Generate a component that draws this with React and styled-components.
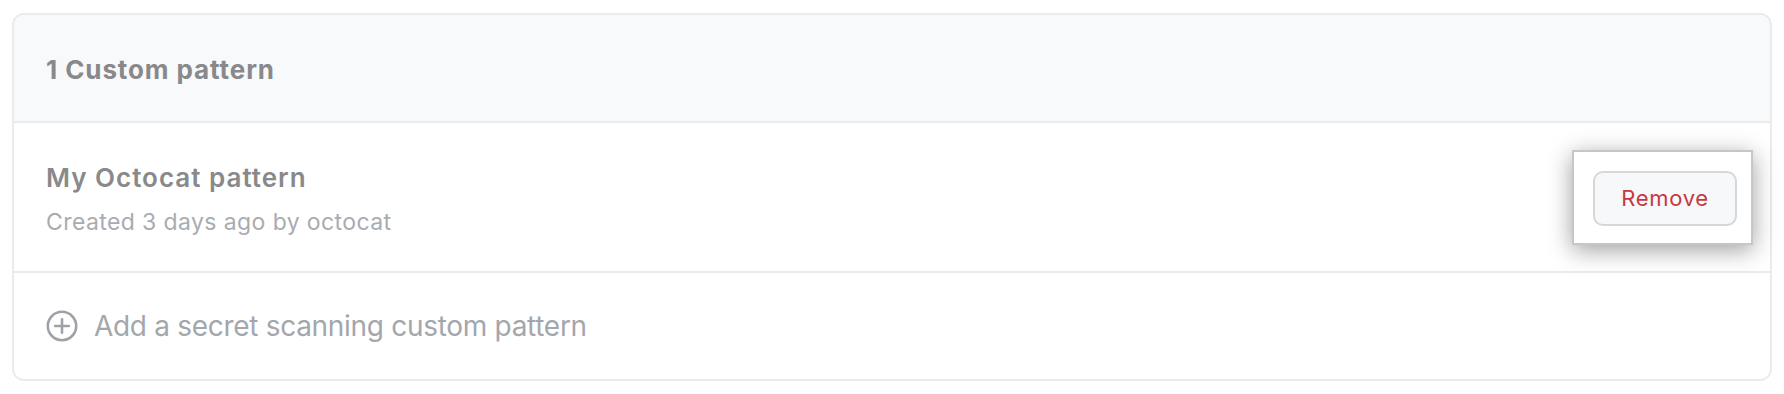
import React from 'react';
import styled, { createGlobalStyle } from 'styled-components';

const GlobalStyle = createGlobalStyle`
  html, body {
    margin: 0;
    padding: 0;
    background: #ffffff;
  }
  body {
    font-family: Inter, "Noto Sans", "Liberation Sans", sans-serif;
    -webkit-font-smoothing: antialiased;
  }
`;

const Page = styled.div`
  width: 1784px;
  height: 394px;
  box-sizing: border-box;
  padding: 13px 12px 0 12px;
`;

const Card = styled.div`
  border: 2px solid #ebebeb;
  border-radius: 12px;
  background: #ffffff;
`;

const Header = styled.div`
  height: 106px;
  display: flex;
  align-items: center;
  padding: 0 32px;
  background: #f8f9fb;
  border-bottom: 2px solid #ebebeb;
  border-radius: 10px 10px 0 0;
`;

const HeaderTitle = styled.h3`
  margin: 0;
  padding-top: 2px;
  font-size: 26px;
  font-weight: 700;
  color: #88898b;
  letter-spacing: 0.9px;
`;

const Row = styled.div`
  height: ${({ $height }) => $height}px;
  display: flex;
  align-items: center;
  justify-content: space-between;
  padding: 0 17px 0 32px;
  border-bottom: ${({ $last }) => ($last ? 'none' : '2px solid #ebebeb')};
`;

const Info = styled.div`
  display: flex;
  flex-direction: column;
  gap: 10px;
  padding-top: 4px;
`;

const Title = styled.div`
  font-size: 26px;
  line-height: 36px;
  font-weight: 600;
  color: #88898b;
  letter-spacing: 1px;
`;

const Meta = styled.div`
  font-size: 23px;
  line-height: 32px;
  color: #a8acb1;
  letter-spacing: 0.4px;
`;

const Highlight = styled.div`
  padding: 19px 14px 17px 19px;
  background: #ffffff;
  border: 2px solid #c6c6c6;
  box-shadow: 0 5px 22px rgba(0, 0, 0, 0.38);
`;

const Button = styled.button`
  width: 144px;
  height: 55px;
  display: flex;
  align-items: center;
  justify-content: center;
  background: #f6f8fa;
  border: 2px solid #d6d7d9;
  border-radius: 10px;
  font-family: inherit;
  font-size: 22px;
  letter-spacing: 0.7px;
  color: #c9373f;
  cursor: pointer;
`;

const AddLink = styled.a`
  display: flex;
  align-items: center;
  gap: 16px;
  font-size: 28px;
  letter-spacing: -0.3px;
  color: #a3a7ac;
  text-decoration: none;
  cursor: pointer;
`;

const PlusCircle = () => (
  <svg width="32" height="32" viewBox="0 0 32 32" fill="none">
    <circle cx="16" cy="16" r="14.2" stroke="#9ea2a7" strokeWidth="2.6" />
    <path d="M16 9.2v13.6M9.2 16h13.6" stroke="#9ea2a7" strokeWidth="2.6" strokeLinecap="round" />
  </svg>
);

const App = () => {
  return (
    <>
      <GlobalStyle />
      <Page>
        <Card>
          <Header>
            <HeaderTitle>1 Custom pattern</HeaderTitle>
          </Header>
          <Row $height={148}>
            <Info>
              <Title>My Octocat pattern</Title>
              <Meta>Created 3 days ago by octocat</Meta>
            </Info>
            <Highlight>
              <Button>Remove</Button>
            </Highlight>
          </Row>
          <Row $height={106} $last>
            <AddLink>
              <PlusCircle />
              Add a secret scanning custom pattern
            </AddLink>
          </Row>
        </Card>
      </Page>
    </>
  );
};

export default App;
